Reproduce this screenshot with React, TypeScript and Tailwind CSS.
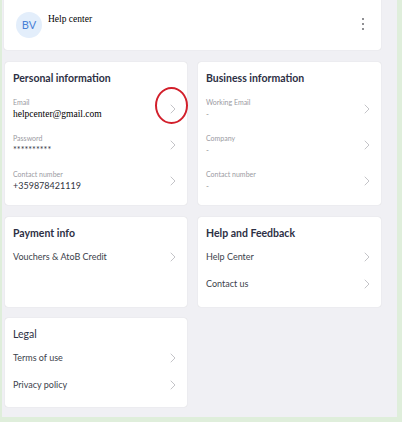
const sans = "font-['Lato',sans-serif]"
const serif = "font-['Liberation_Serif',serif]"

function Chevron() {
  return (
    <svg width="6" height="10" viewBox="0 0 6 10" fill="none" className="shrink-0">
      <path d="M1 1l4 4-4 4" stroke="#c4c4c8" strokeWidth="1" strokeLinecap="round" strokeLinejoin="round" />
    </svg>
  )
}

interface FieldProps {
  label: string
  value: string
  valueClass?: string
  marked?: boolean
}

function Field({ label, value, valueClass, marked }: FieldProps) {
  return (
    <div className="relative flex h-[36px] items-center justify-between pr-[11px]">
      <div className="flex flex-col">
        <span className={`${sans} text-[7px] leading-[10px] text-[#9a9aa2]`}>{label}</span>
        <span className={valueClass}>{value}</span>
      </div>
      <Chevron />
      {marked && (
        <div className="pointer-events-none absolute right-[-1px] top-[-4px] h-[37px] w-[33px] rounded-[50%] border-2 border-[#d21f2b]" />
      )}
    </div>
  )
}

function LinkRow({ text }: { text: string }) {
  return (
    <div className="flex h-[27px] items-center justify-between pr-[11px]">
      <span className={`${sans} text-[9px] text-[#3c3f4c]`}>{text}</span>
      <Chevron />
    </div>
  )
}

function Card({ title, children, className = '', light }: { title: string; children: React.ReactNode; className?: string; light?: boolean }) {
  return (
    <div className={`rounded-[3px] bg-white pl-[8px] pt-[8px] shadow-[0_0_1px_rgba(0,0,0,0.18)] ${className}`}>
      <h2 className={`${sans} text-[10.5px] leading-[16px] text-[#2d3044] ${light ? 'font-normal' : 'font-bold'}`}>{title}</h2>
      {children}
    </div>
  )
}

export default function App() {
  const personalValue = `${serif} text-[9.5px] leading-[14px] text-black`
  const plainValue = `${sans} text-[9px] leading-[14px] text-[#33353f]`
  const dashValue = `${sans} text-[8px] leading-[14px] text-[#8a8a90]`

  return (
    <div className="flex h-[422px] w-[402px] flex-col bg-[#dfeedb]">
      <div className="ml-[2px] mr-[5px] flex h-[417px] flex-col bg-[#f0f0f4] pl-[3px] pr-[16px]">
        <div className="-ml-px flex h-[50px] items-start justify-between rounded-b-[3px] bg-white shadow-[0_0_1px_rgba(0,0,0,0.18)]">
          <div className="flex items-start gap-[6px] pl-[12px] pt-[12px]">
            <div className={`${sans} flex h-[26px] w-[26px] items-center justify-center rounded-full bg-[#e3eefb] text-[11px] font-normal text-[#4a80d6]`}>
              BV
            </div>
            <span className={`${serif} mt-[1px] text-[9.5px] leading-[12px] text-black`}>Help center</span>
          </div>
          <div className="mr-[17px] mt-[18px] flex flex-col gap-[3px]">
            <span className="h-[2px] w-[2px] rounded-full bg-[#6b6b70]" />
            <span className="h-[2px] w-[2px] rounded-full bg-[#6b6b70]" />
            <span className="h-[2px] w-[2px] rounded-full bg-[#6b6b70]" />
          </div>
        </div>

        <div className="mt-[12px] grid grid-cols-[182px_183px] gap-x-[11px]">
          <Card title="Personal information" className="h-[143px]">
            <div className="mt-[5px]">
              <Field label="Email" value="helpcenter@gmail.com" valueClass={personalValue} marked />
              <Field label="Password" value="**********" valueClass={plainValue} />
              <Field label="Contact number" value="+359878421119" valueClass={plainValue} />
            </div>
          </Card>
          <Card title="Business information" className="h-[143px]">
            <div className="mt-[5px]">
              <Field label="Working Email" value="-" valueClass={dashValue} />
              <Field label="Company" value="-" valueClass={dashValue} />
              <Field label="Contact number" value="-" valueClass={dashValue} />
            </div>
          </Card>
        </div>

        <div className="mt-[12px] grid grid-cols-[182px_183px] gap-x-[11px]">
          <Card title="Payment info" className="h-[90px]">
            <div className="mt-[2px]">
              <LinkRow text="Vouchers & AtoB Credit" />
            </div>
          </Card>
          <Card title="Help and Feedback" className="h-[90px]">
            <div className="mt-[2px]">
              <LinkRow text="Help Center" />
              <LinkRow text="Contact us" />
            </div>
          </Card>
        </div>

        <div className="mt-[11px] grid grid-cols-[182px_183px] gap-x-[11px]">
          <Card title="Legal" className="h-[89px]" light>
            <div className="mt-[2px]">
              <LinkRow text="Terms of use" />
              <LinkRow text="Privacy policy" />
            </div>
          </Card>
        </div>
      </div>
    </div>
  )
}
